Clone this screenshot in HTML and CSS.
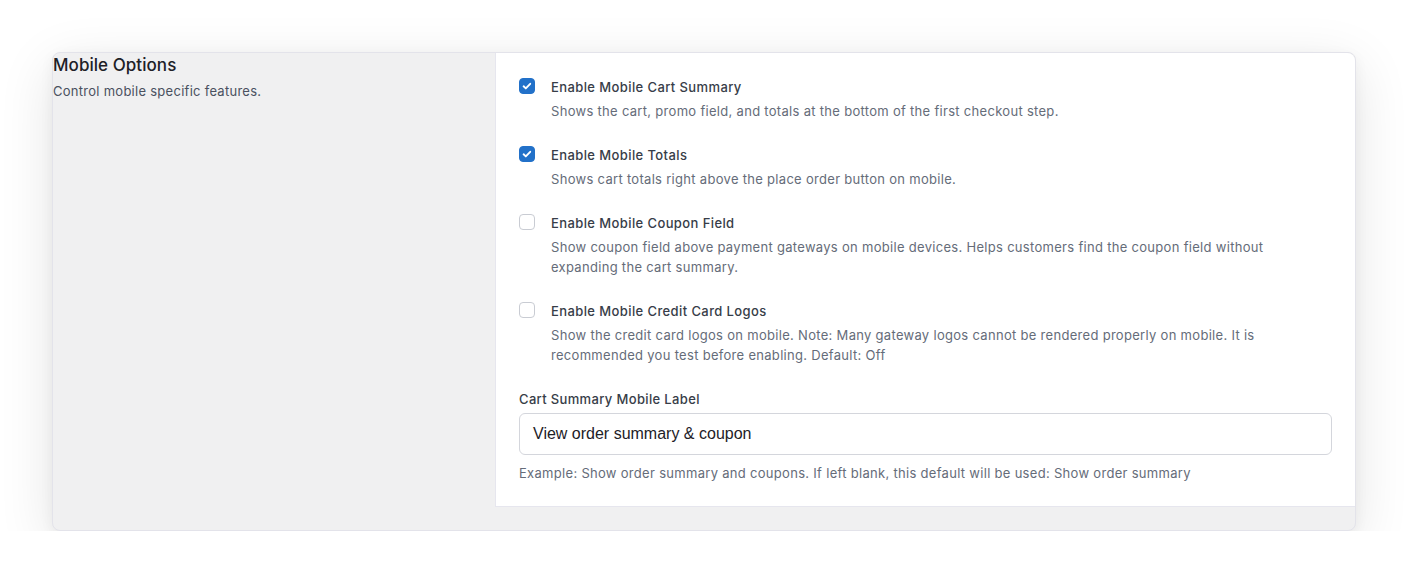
FILE: index.html
```html
<!DOCTYPE html>
<html lang="en">
<head>
<meta charset="utf-8">
<title>Mobile Options</title>
<link rel="stylesheet" href="styles.css">
</head>
<body>
<div class="page">
  <section class="card">
    <div class="intro">
      <h2 class="title">Mobile Options</h2>
      <p class="subtitle">Control mobile specific features.</p>
    </div>
    <div class="panel">
      <div class="option">
        <span class="box checked"><svg viewBox="0 0 16 16" width="16" height="16"><path d="M4.6 8.3l2.2 2.1 4.4-4.6" fill="none" stroke="#fff" stroke-width="1.9" stroke-linecap="round" stroke-linejoin="round"/></svg></span>
        <div class="text">
          <div class="label">Enable Mobile Cart Summary</div>
          <div class="desc">Shows the cart, promo field, and totals at the bottom of the first checkout step.</div>
        </div>
      </div>
      <div class="option">
        <span class="box checked"><svg viewBox="0 0 16 16" width="16" height="16"><path d="M4.6 8.3l2.2 2.1 4.4-4.6" fill="none" stroke="#fff" stroke-width="1.9" stroke-linecap="round" stroke-linejoin="round"/></svg></span>
        <div class="text">
          <div class="label">Enable Mobile Totals</div>
          <div class="desc">Shows cart totals right above the place order button on mobile.</div>
        </div>
      </div>
      <div class="option">
        <span class="box"></span>
        <div class="text">
          <div class="label">Enable Mobile Coupon Field</div>
          <div class="desc">Show coupon field above payment gateways on mobile devices. Helps customers find the coupon field without expanding the cart summary.</div>
        </div>
      </div>
      <div class="option">
        <span class="box"></span>
        <div class="text">
          <div class="label">Enable Mobile Credit Card Logos</div>
          <div class="desc">Show the credit card logos on mobile. Note: Many gateway logos cannot be rendered properly on mobile. It is recommended you test before enabling. Default: Off</div>
        </div>
      </div>
      <div class="field">
        <label class="field-label">Cart Summary Mobile Label</label>
        <div class="input">View order summary &amp; coupon</div>
        <div class="help">Example: Show order summary and coupons. If left blank, this default will be used: Show order summary</div>
      </div>
    </div>
  </section>
</div>
</body>
</html>
```

FILE: styles.css
```css
* { box-sizing: border-box; }
html, body { margin: 0; padding: 0; background: #ffffff; }
body {
  font-family: Inter, "Noto Sans", "Liberation Sans", sans-serif;
  -webkit-font-smoothing: antialiased;
}
.page {
  padding: 52px 53px 0 52px;
}
.card {
  display: flex;
  background: #f0f0f1;
  border: 1px solid #e3e3ea;
  border-radius: 8px;
  padding-bottom: 23px;
  box-shadow: 0 14px 56px rgba(0, 0, 0, 0.11), 0 4px 14px rgba(0, 0, 0, 0.05);
  height: 479px;
}
.intro {
  width: 442px;
  flex: none;
}
.title {
  margin: 0;
  font-size: 17px;
  line-height: 24px;
  font-weight: 500;
  color: #1d2127;
  letter-spacing: 0.05px;
}
.subtitle {
  margin: 4px 0 0;
  font-size: 13px;
  line-height: 20px;
  color: #4a5160;
  letter-spacing: 0.27px;
}
.panel {
  flex: 1;
  background: #ffffff;
  border-left: 1px solid #e6e6ee;
  border-bottom: 1px solid #e6e6ee;
  border-top-right-radius: 8px;
  padding: 24px 23px 24px 23px;
  display: flex;
  flex-direction: column;
  gap: 24px;
}
.option {
  display: flex;
  gap: 16px;
  align-items: flex-start;
}
.box {
  flex: none;
  width: 16px;
  height: 16px;
  margin-top: 1px;
  border: 1px solid #c9ccd3;
  border-radius: 4px;
  background: #fff;
  display: flex;
}
.box.checked {
  background: #2271c9;
  border-color: #2271c9;
}
.box svg { margin: -1px; }
.text { display: flex; flex-direction: column; gap: 4px; }
.label {
  font-size: 13px;
  line-height: 20px;
  font-weight: 500;
  color: #373d48;
  letter-spacing: 0.4px;
}
.desc {
  font-size: 13px;
  line-height: 20px;
  color: #656c79;
  letter-spacing: 0.3px;
}
.field { display: flex; flex-direction: column; }
.field-label {
  font-size: 13px;
  line-height: 20px;
  font-weight: 500;
  color: #373d48;
  letter-spacing: 0.35px;
}
.input {
  margin-top: 4px;
  height: 42px;
  border: 1px solid #d4d6dc;
  border-radius: 6px;
  padding: 0 13px;
  display: flex;
  align-items: center;
  font-family: "Liberation Sans", Arial, sans-serif;
  font-size: 16px;
  color: #1d2127;
}
.help {
  margin-top: 8px;
  font-size: 13px;
  line-height: 20px;
  color: #656c79;
  letter-spacing: 0.3px;
}
```
